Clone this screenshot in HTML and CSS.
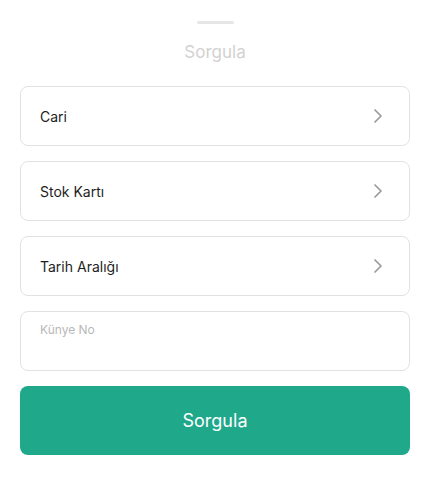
FILE: index.html
```html
<!DOCTYPE html>
<html lang="tr">
<head>
<meta charset="utf-8">
<title>Sorgula</title>
<link rel="stylesheet" href="styles.css">
</head>
<body>
<div class="sheet">
  <div class="handle"></div>
  <h1 class="title">Sorgula</h1>
  <div class="fields">
    <div class="row">
      <span class="row-label">Cari</span>
      <svg class="chev" width="10" height="16" viewBox="0 0 10 16"><path d="M2 2l6 6-6 6" fill="none" stroke="#9a9a9a" stroke-width="1.7" stroke-linecap="round" stroke-linejoin="round"/></svg>
    </div>
    <div class="row">
      <span class="row-label">Stok Kartı</span>
      <svg class="chev" width="10" height="16" viewBox="0 0 10 16"><path d="M2 2l6 6-6 6" fill="none" stroke="#9a9a9a" stroke-width="1.7" stroke-linecap="round" stroke-linejoin="round"/></svg>
    </div>
    <div class="row">
      <span class="row-label">Tarih Aralığı</span>
      <svg class="chev" width="10" height="16" viewBox="0 0 10 16"><path d="M2 2l6 6-6 6" fill="none" stroke="#9a9a9a" stroke-width="1.7" stroke-linecap="round" stroke-linejoin="round"/></svg>
    </div>
    <div class="input-box">
      <span class="input-label">Künye No</span>
    </div>
    <button class="submit">Sorgula</button>
  </div>
</div>
</body>
</html>
```
FILE: styles.css
```css
html, body {
  margin: 0;
  padding: 0;
  background: #ffffff;
}
body {
  font-family: Inter, "Noto Sans", sans-serif;
  color: #1e1e1e;
}
.sheet {
  display: flex;
  flex-direction: column;
  align-items: center;
  padding: 21px 20px 0;
}
.handle {
  width: 37px;
  height: 3px;
  border-radius: 2px;
  background: #e6e6e6;
}
.title {
  margin: 17px 0 0;
  font-size: 17px;
  line-height: 22px;
  font-weight: 400;
  color: #d2d2d2;
}
.fields {
  width: 100%;
  margin-top: 23px;
  display: flex;
  flex-direction: column;
  gap: 15px;
}
.row {
  box-sizing: border-box;
  height: 60px;
  border: 1px solid #e2e2e2;
  border-radius: 8px;
  display: flex;
  align-items: center;
  justify-content: space-between;
  padding: 0 26px 0 19px;
}
.row-label {
  font-size: 14px;
  color: #1e1e1e;
}
.chev {
  display: block;
}
.input-box {
  box-sizing: border-box;
  height: 60px;
  border: 1px solid #e2e2e2;
  border-radius: 8px;
  padding: 6px 19px 0;
}
.input-label {
  font-size: 12px;
  color: #b8b8b8;
}
.submit {
  height: 69px;
  border: none;
  border-radius: 8px;
  background: #20a88b;
  color: #ffffff;
  font-family: Inter, "Noto Sans", sans-serif;
  font-size: 18px;
  font-weight: 400;
}
```
